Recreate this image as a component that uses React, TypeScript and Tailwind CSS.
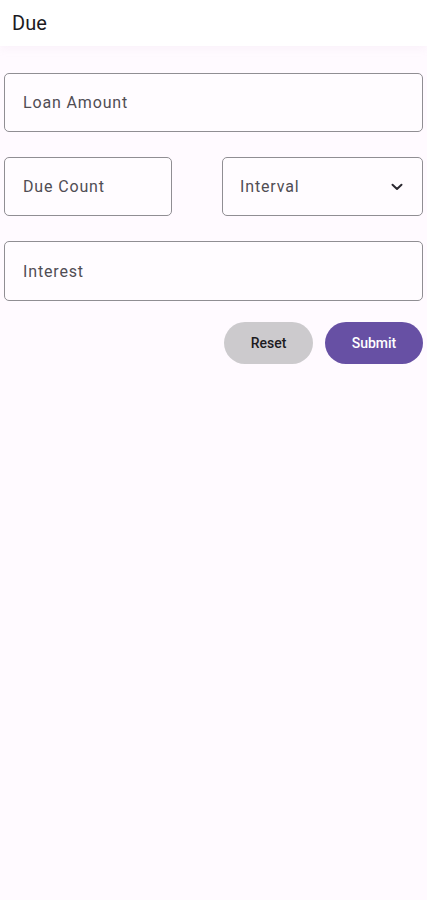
import React from "react";

function Field({ label, className = "" }: { label: string; className?: string }) {
  return (
    <div
      className={`flex items-center rounded-[5px] border border-[#908e93] bg-[#fffcff] pl-[18px] pt-[1px] text-[16px] tracking-[0.85px] text-[#504d54] ${className}`}
    >
      {label}
    </div>
  );
}

export default function App() {
  return (
    <div
      className="min-h-[900px] w-full bg-[#fffaff]"
      style={{ fontFamily: "Roboto, 'Liberation Sans', sans-serif" }}
    >
      <div className="flex h-[46px] items-center bg-white pl-[12px] text-[20px] text-[#1c1b1f] shadow-[0_3px_8px_rgba(210,190,210,0.12)]">
        Due
      </div>
      <div className="flex flex-col px-[4px] pt-[27px]">
        <Field label="Loan Amount" className="h-[59px]" />
        <div className="mt-[25px] flex gap-[50px]">
          <Field label="Due Count" className="h-[59px] w-[168px]" />
          <div className="flex h-[59px] flex-1 items-center justify-between rounded-[5px] border border-[#908e93] bg-[#fffcff] pl-[17px] pr-[19px] pt-[1px] text-[16px] tracking-[0.85px] text-[#504d54]">
            <span>Interval</span>
            <svg width="12" height="8" viewBox="0 0 12 8" fill="none">
              <path d="M1.5 1.8 L6 6 L10.5 1.8" stroke="#2b2930" strokeWidth="2" strokeLinecap="round" strokeLinejoin="round" />
            </svg>
          </div>
        </div>
        <Field label="Interest" className="mt-[25px] h-[60px]" />
        <div className="mt-[21px] flex justify-end gap-[12px]">
          <button className="flex h-[42px] w-[89px] items-center justify-center rounded-full bg-[#cccacd] text-[14px] font-medium text-[#1c1b1f]">
            Reset
          </button>
          <button className="flex h-[42px] w-[98px] items-center justify-center rounded-full bg-[#6750a4] text-[14px] font-medium text-white">
            Submit
          </button>
        </div>
      </div>
    </div>
  );
}
